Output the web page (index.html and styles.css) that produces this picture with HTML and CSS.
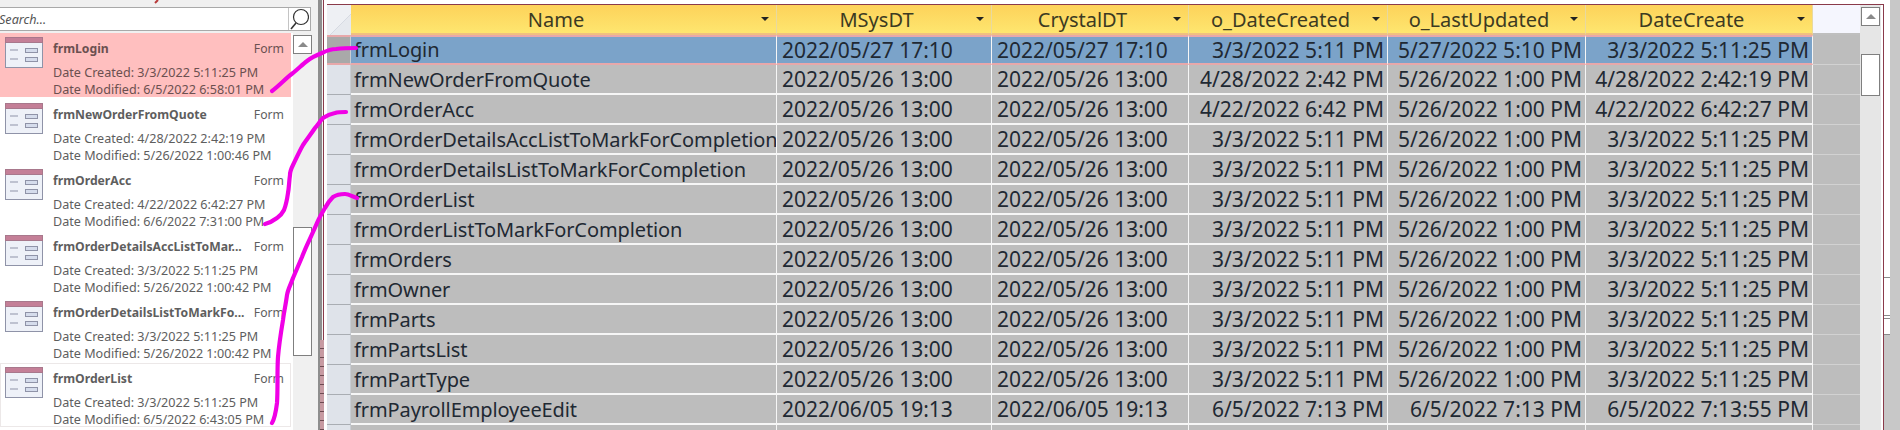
FILE: index.html
```html
<!DOCTYPE html>
<html lang="en">
<head>
<meta charset="utf-8">
<title>Form dates</title>
<link rel="stylesheet" href="styles.css">
</head>
<body>
<div class="app">
  <aside class="nav">
    <div class="nav-body">
      <div class="search">
        <span class="search-text">Search...</span>
        <span class="search-btn"><svg width="20" height="23" viewBox="0 0 20 23"><circle cx="12" cy="9" r="7.5" fill="none" stroke="#333" stroke-width="1.2"/><path d="M7 15 L2 21" stroke="#333" stroke-width="1.6" fill="none"/></svg></span>
      </div>
      <div class="nav-content">
        <div class="list">
          <div class="item selected">
            <svg class="form-icon" width="38" height="32" viewBox="0 0 38 32"><rect x=".5" y=".5" width="37" height="30" fill="#eef1f8" stroke="#8f93a8"/><rect x=".5" y=".5" width="37" height="5" fill="#c47f97" stroke="#a8788c"/><path d="M5 13h8M5 22h8" stroke="#8f93a8"/><rect x="20.5" y="11.500" width="12" height="4" fill="#d5dcec" stroke="#8f93a8"/><rect x="20.500" y="20.500" width="12" height="4" fill="#d5dcec" stroke="#8f93a8"/></svg>
            <div class="item-text"><div class="item-head"><span class="item-name">frmLogin</span><span class="item-type">Form</span></div><div class="item-date first">Date Created: 3/3/2022 5:11:25 PM</div><div class="item-date">Date Modified: 6/5/2022 6:58:01 PM</div></div>
          </div>
          <div class="item">
            <svg class="form-icon" width="38" height="32" viewBox="0 0 38 32"><rect x=".5" y=".5" width="37" height="30" fill="#eef1f8" stroke="#8f93a8"/><rect x=".5" y=".5" width="37" height="5" fill="#c47f97" stroke="#a8788c"/><path d="M5 13h8M5 22h8" stroke="#8f93a8"/><rect x="20.5" y="11.500" width="12" height="4" fill="#d5dcec" stroke="#8f93a8"/><rect x="20.500" y="20.500" width="12" height="4" fill="#d5dcec" stroke="#8f93a8"/></svg>
            <div class="item-text"><div class="item-head"><span class="item-name">frmNewOrderFromQuote</span><span class="item-type">Form</span></div><div class="item-date first">Date Created: 4/28/2022 2:42:19 PM</div><div class="item-date">Date Modified: 5/26/2022 1:00:46 PM</div></div>
          </div>
          <div class="item">
            <svg class="form-icon" width="38" height="32" viewBox="0 0 38 32"><rect x=".5" y=".5" width="37" height="30" fill="#eef1f8" stroke="#8f93a8"/><rect x=".5" y=".5" width="37" height="5" fill="#c47f97" stroke="#a8788c"/><path d="M5 13h8M5 22h8" stroke="#8f93a8"/><rect x="20.5" y="11.500" width="12" height="4" fill="#d5dcec" stroke="#8f93a8"/><rect x="20.500" y="20.500" width="12" height="4" fill="#d5dcec" stroke="#8f93a8"/></svg>
            <div class="item-text"><div class="item-head"><span class="item-name">frmOrderAcc</span><span class="item-type">Form</span></div><div class="item-date first">Date Created: 4/22/2022 6:42:27 PM</div><div class="item-date">Date Modified: 6/6/2022 7:31:00 PM</div></div>
          </div>
          <div class="item">
            <svg class="form-icon" width="38" height="32" viewBox="0 0 38 32"><rect x=".5" y=".5" width="37" height="30" fill="#eef1f8" stroke="#8f93a8"/><rect x=".5" y=".5" width="37" height="5" fill="#c47f97" stroke="#a8788c"/><path d="M5 13h8M5 22h8" stroke="#8f93a8"/><rect x="20.5" y="11.500" width="12" height="4" fill="#d5dcec" stroke="#8f93a8"/><rect x="20.500" y="20.500" width="12" height="4" fill="#d5dcec" stroke="#8f93a8"/></svg>
            <div class="item-text"><div class="item-head"><span class="item-name">frmOrderDetailsAccListToMar...</span><span class="item-type">Form</span></div><div class="item-date first">Date Created: 3/3/2022 5:11:25 PM</div><div class="item-date">Date Modified: 5/26/2022 1:00:42 PM</div></div>
          </div>
          <div class="item">
            <svg class="form-icon" width="38" height="32" viewBox="0 0 38 32"><rect x=".5" y=".5" width="37" height="30" fill="#eef1f8" stroke="#8f93a8"/><rect x=".5" y=".5" width="37" height="5" fill="#c47f97" stroke="#a8788c"/><path d="M5 13h8M5 22h8" stroke="#8f93a8"/><rect x="20.5" y="11.500" width="12" height="4" fill="#d5dcec" stroke="#8f93a8"/><rect x="20.500" y="20.500" width="12" height="4" fill="#d5dcec" stroke="#8f93a8"/></svg>
            <div class="item-text"><div class="item-head"><span class="item-name">frmOrderDetailsListToMarkFo...</span><span class="item-type">Form</span></div><div class="item-date first">Date Created: 3/3/2022 5:11:25 PM</div><div class="item-date">Date Modified: 5/26/2022 1:00:42 PM</div></div>
          </div>
          <div class="item hovered">
            <svg class="form-icon" width="38" height="32" viewBox="0 0 38 32"><rect x=".5" y=".5" width="37" height="30" fill="#eef1f8" stroke="#8f93a8"/><rect x=".5" y=".5" width="37" height="5" fill="#c47f97" stroke="#a8788c"/><path d="M5 13h8M5 22h8" stroke="#8f93a8"/><rect x="20.5" y="11.500" width="12" height="4" fill="#d5dcec" stroke="#8f93a8"/><rect x="20.500" y="20.500" width="12" height="4" fill="#d5dcec" stroke="#8f93a8"/></svg>
            <div class="item-text"><div class="item-head"><span class="item-name">frmOrderList</span><span class="item-type">Form</span></div><div class="item-date first">Date Created: 3/3/2022 5:11:25 PM</div><div class="item-date">Date Modified: 6/5/2022 6:43:05 PM</div></div>
          </div>
        </div>
        <div class="nav-scroll">
          <div class="scroll-btn"><span class="tri"></span></div>
          <div class="nav-thumb"></div>
        </div>
      </div>
    </div>
  </aside>
  <div class="splitter"><div class="splitter-low"></div></div>
  <main class="doc">
    <div class="grid">
      <div class="row head">
        <div class="corner"></div>
        <div class="th"><span class="th-label">Name</span><span class="arrow"></span></div>
        <div class="th"><span class="th-label">MSysDT</span><span class="arrow"></span></div>
        <div class="th"><span class="th-label">CrystalDT</span><span class="arrow"></span></div>
        <div class="th"><span class="th-label">o_DateCreated</span><span class="arrow"></span></div>
        <div class="th"><span class="th-label">o_LastUpdated</span><span class="arrow"></span></div>
        <div class="th"><span class="th-label">DateCreate</span><span class="arrow"></span></div>
        <div class="head-rest"></div>
      </div>
      <div class="row sel"><div class="sel-cell"></div><div class="td name">frmLogin</div><div class="td dt">2022/05/27 17:10</div><div class="td dt">2022/05/27 17:10</div><div class="td r">3/3/2022 5:11 PM</div><div class="td r">5/27/2022 5:10 PM</div><div class="td r">3/3/2022 5:11:25 PM</div><div class="fill"></div></div>
      <div class="row"><div class="sel-cell"></div><div class="td name">frmNewOrderFromQuote</div><div class="td dt">2022/05/26 13:00</div><div class="td dt">2022/05/26 13:00</div><div class="td r">4/28/2022 2:42 PM</div><div class="td r">5/26/2022 1:00 PM</div><div class="td r">4/28/2022 2:42:19 PM</div><div class="fill"></div></div>
      <div class="row"><div class="sel-cell"></div><div class="td name">frmOrderAcc</div><div class="td dt">2022/05/26 13:00</div><div class="td dt">2022/05/26 13:00</div><div class="td r">4/22/2022 6:42 PM</div><div class="td r">5/26/2022 1:00 PM</div><div class="td r">4/22/2022 6:42:27 PM</div><div class="fill"></div></div>
      <div class="row"><div class="sel-cell"></div><div class="td name">frmOrderDetailsAccListToMarkForCompletion</div><div class="td dt">2022/05/26 13:00</div><div class="td dt">2022/05/26 13:00</div><div class="td r">3/3/2022 5:11 PM</div><div class="td r">5/26/2022 1:00 PM</div><div class="td r">3/3/2022 5:11:25 PM</div><div class="fill"></div></div>
      <div class="row"><div class="sel-cell"></div><div class="td name">frmOrderDetailsListToMarkForCompletion</div><div class="td dt">2022/05/26 13:00</div><div class="td dt">2022/05/26 13:00</div><div class="td r">3/3/2022 5:11 PM</div><div class="td r">5/26/2022 1:00 PM</div><div class="td r">3/3/2022 5:11:25 PM</div><div class="fill"></div></div>
      <div class="row"><div class="sel-cell"></div><div class="td name">frmOrderList</div><div class="td dt">2022/05/26 13:00</div><div class="td dt">2022/05/26 13:00</div><div class="td r">3/3/2022 5:11 PM</div><div class="td r">5/26/2022 1:00 PM</div><div class="td r">3/3/2022 5:11:25 PM</div><div class="fill"></div></div>
      <div class="row"><div class="sel-cell"></div><div class="td name">frmOrderListToMarkForCompletion</div><div class="td dt">2022/05/26 13:00</div><div class="td dt">2022/05/26 13:00</div><div class="td r">3/3/2022 5:11 PM</div><div class="td r">5/26/2022 1:00 PM</div><div class="td r">3/3/2022 5:11:25 PM</div><div class="fill"></div></div>
      <div class="row"><div class="sel-cell"></div><div class="td name">frmOrders</div><div class="td dt">2022/05/26 13:00</div><div class="td dt">2022/05/26 13:00</div><div class="td r">3/3/2022 5:11 PM</div><div class="td r">5/26/2022 1:00 PM</div><div class="td r">3/3/2022 5:11:25 PM</div><div class="fill"></div></div>
      <div class="row"><div class="sel-cell"></div><div class="td name">frmOwner</div><div class="td dt">2022/05/26 13:00</div><div class="td dt">2022/05/26 13:00</div><div class="td r">3/3/2022 5:11 PM</div><div class="td r">5/26/2022 1:00 PM</div><div class="td r">3/3/2022 5:11:25 PM</div><div class="fill"></div></div>
      <div class="row"><div class="sel-cell"></div><div class="td name">frmParts</div><div class="td dt">2022/05/26 13:00</div><div class="td dt">2022/05/26 13:00</div><div class="td r">3/3/2022 5:11 PM</div><div class="td r">5/26/2022 1:00 PM</div><div class="td r">3/3/2022 5:11:25 PM</div><div class="fill"></div></div>
      <div class="row"><div class="sel-cell"></div><div class="td name">frmPartsList</div><div class="td dt">2022/05/26 13:00</div><div class="td dt">2022/05/26 13:00</div><div class="td r">3/3/2022 5:11 PM</div><div class="td r">5/26/2022 1:00 PM</div><div class="td r">3/3/2022 5:11:25 PM</div><div class="fill"></div></div>
      <div class="row"><div class="sel-cell"></div><div class="td name">frmPartType</div><div class="td dt">2022/05/26 13:00</div><div class="td dt">2022/05/26 13:00</div><div class="td r">3/3/2022 5:11 PM</div><div class="td r">5/26/2022 1:00 PM</div><div class="td r">3/3/2022 5:11:25 PM</div><div class="fill"></div></div>
      <div class="row"><div class="sel-cell"></div><div class="td name">frmPayrollEmployeeEdit</div><div class="td dt">2022/06/05 19:13</div><div class="td dt">2022/06/05 19:13</div><div class="td r">6/5/2022 7:13 PM</div><div class="td r">6/5/2022 7:13 PM</div><div class="td r">6/5/2022 7:13:55 PM</div><div class="fill"></div></div>
      <div class="row"><div class="sel-cell"></div><div class="td name"></div><div class="td dt"></div><div class="td dt"></div><div class="td r"></div><div class="td r"></div><div class="td r"></div><div class="fill"></div></div>
    </div>
    <div class="doc-scroll">
      <div class="scroll-btn"><span class="tri"></span></div>
      <div class="doc-thumb"></div>
    </div>
  </main>
  <div class="edge"></div>
  <div class="gutter"></div>
</div>
<svg class="ink" width="1900" height="430" viewBox="0 0 1900 430">
  <path class="red-mark" d="M158 0 L155 3"/>
  <path class="stroke" d="M272 91 C280 85 286 78 293 73 C299 68 303 64 307 61 C312 57 317 55 322 53 C328 50 332 49 336 49 C344 48 350 48 356 48"/>
  <path class="stroke" d="M346 112 C341 112 338 112 335 113 C330 114 326 116 323 118 C320 121 318 125 315 128 C311 134 307 139 303 145 C299 152 296 159 293 165 C291 169 290 171 290 175 C289 182 289 188 288 193 C287 200 286 205 284 210 C282 214 280 216 277 218 C273 221 269 223 265 224"/>
  <path class="stroke" d="M357 198 C353 197 349 194 345 194 C340 194 336 195 333 197 C330 200 327 204 325 208 C322 213 319 218 317 223 C312 235 306 246 302 257 C299 264 296 271 293 278 C291 284 288 289 287 295 C286 303 284 312 283 320 C281 332 279 345 278 357 C277 372 278 388 277 403 C276 411 275 418 272 423"/>
</svg>
</body>
</html>
```
FILE: styles.css
```css
* { box-sizing: border-box; }
html, body { margin: 0; padding: 0; width: 1900px; height: 430px; overflow: hidden; background: #fff; }
body { font-family: "Noto Sans", "Open Sans", sans-serif; }

.app { display: flex; height: 430px; width: 1900px; overflow: hidden; }

/* navigation pane */
.nav { width: 318px; height: 430px; flex: none; background: #f0f0f0; overflow: hidden; }
.nav-body { padding-top: 7px; }
.search { display: flex; height: 24px; width: 311px; border: 1px solid #a9a9a9; border-left: 0; background: #fff; align-items: center; justify-content: space-between; }
.search-text { font-size: 12.6px; font-style: italic; color: #555; margin-left: -1px; }
.search-btn { width: 22px; height: 22px; border-left: 1px solid #c4c4c4; display: flex; }
.nav-content { display: flex; margin-top: 2px; }
.list { width: 293px; background: #fff; padding-right: 2px; height: 397px; overflow: hidden; }
.item { display: flex; height: 64px; margin-bottom: 2px; padding: 4px 7px 0 5px; color: #5e5e5e; }
.item.selected { background: #ffbfbf; color: #6b5050; }
.item.hovered { box-shadow: inset 0 0 0 1px #ece8e8; }
.form-icon { flex: none; }
.item-text { flex: 1; min-width: 0; margin-left: 10px; }
.item-head { display: flex; align-items: center; height: 20px; gap: 4px; margin-top: 1px; }
.item-name { flex: 1; min-width: 0; font-size: 12.2px; font-weight: 700; white-space: nowrap; }
.item-type { font-size: 12.2px; flex: none; }
.item-date { font-size: 12.6px; line-height: 17px; white-space: nowrap; }
.item-date.first { margin-top: 6px; }
.nav-scroll { width: 25px; padding-top: 2px; }
.scroll-btn { width: 19px; height: 19px; border: 1px solid #7f7f7f; background: #fff; display: flex; align-items: center; justify-content: center; }
.tri { width: 0; height: 0; border-left: 5px solid transparent; border-right: 5px solid transparent; border-bottom: 5px solid #8a8a8a; }
.nav-thumb { width: 19px; height: 129px; margin-top: 173px; border: 1px solid #7f7f7f; background: #fff; }

/* splitter */
.splitter { width: 9px; flex: none; height: 430px; padding-top: 340px; background: linear-gradient(90deg, #8e8e8e 0 4px, #f4f4f4 4px 5px, #8a3a4a 5px 6px, #fff 6px); }
.splitter-low { width: 4px; height: 90px; margin-left: 2px; background: repeating-linear-gradient(180deg, #c79aa2 0 8px, #6e4a52 8px 9px); }

/* document */
.doc { width: 1556px; flex: none; display: flex; margin-top: 4px; height: 426px; border-top: 1px solid #8a3a4a; background: #fff; overflow: hidden; }
.grid { width: 1533px; height: 425px; flex: none; font-size: 20px; color: #1f2933; overflow: hidden; }
.row { display: grid; grid-template-columns: 24px 426px 215px 197px 199px 198px 227px 47px; height: 30px; }
.corner { background: linear-gradient(135deg, #eef0f4 0 60%, #d6dae2 60% 62%, #e6e9ee 62%); }
.th { display: flex; align-items: center; background: linear-gradient(180deg, #fdd25a, #fee66f); border-right: 1px solid #e8d9a0; border-bottom: 2px solid #f0c080; color: #3c3a22; min-width: 0; }
.th-label { flex: 1; text-align: center; white-space: nowrap; }
.arrow { flex: none; width: 0; height: 0; margin: 0 7px 0 0; border-left: 4px solid transparent; border-right: 4px solid transparent; border-top: 4px solid #222; }
.head-rest { background: #f5f6fe; border-bottom: 2px solid #bfbfbf; }
.sel-cell { background: #dfe3ea; border-bottom: 1px solid #a9adb3; border-right: 1px solid #c9cdd3; }
.td { background: #bdbdbd; border-right: 1px solid #f6f6f6; border-bottom: 2px solid #f6f6f6; padding-top: 1px; line-height: 27px; white-space: nowrap; overflow: hidden; }
.td.name { padding-left: 3px; letter-spacing: -0.1px; }
.td.dt { padding-left: 5px; font-size: 21px; }
.td.r { text-align: right; padding-right: 3px; font-size: 21px; }
.fill { background: #bdbdbd; border-bottom: 1px solid #d2d2d2; }
.row.sel .td { background: #7ba3c9; border-top: 2px solid #e8a8aa; border-bottom: 2px solid #e8a8aa; padding-top: 0; line-height: 26px; }
.row.sel .sel-cell { background: #a9a9a9; border-top: 2px solid #e8a8aa; border-bottom: 2px solid #e8a8aa; }

.doc-scroll { flex: none; width: 23px; background: linear-gradient(90deg, #e6e6e6 0 21px, #fff 21px); padding: 2px 0 0 1px; }
.doc-thumb { width: 19px; height: 42px; margin-top: 28px; border: 1px solid #7f7f7f; background: #fff; }

.edge { width: 7px; flex: none; height: 426px; margin-top: 4px; border-left: 1px solid #8a3a4a; background: linear-gradient(180deg, #fff 0 273px, #8a8a8a 273px 274px, #fff 274px 311px, #8a8a8a 311px 312px, #fff 312px 314px, #8a8a8a 314px 315px, #fff 315px 330px, #8a8a8a 330px 331px, #c8c8c8 331px); }
.gutter { flex: 1; background: #c8c8c8; }

/* freehand ink drawn over the screenshot */
.ink { position: absolute; top: 0; left: 0; pointer-events: none; }
.ink .stroke { fill: none; stroke: #f000e6; stroke-width: 4.2; stroke-linecap: round; stroke-linejoin: round; }
.ink .red-mark { fill: none; stroke: #b83a3a; stroke-width: 2; }
```
